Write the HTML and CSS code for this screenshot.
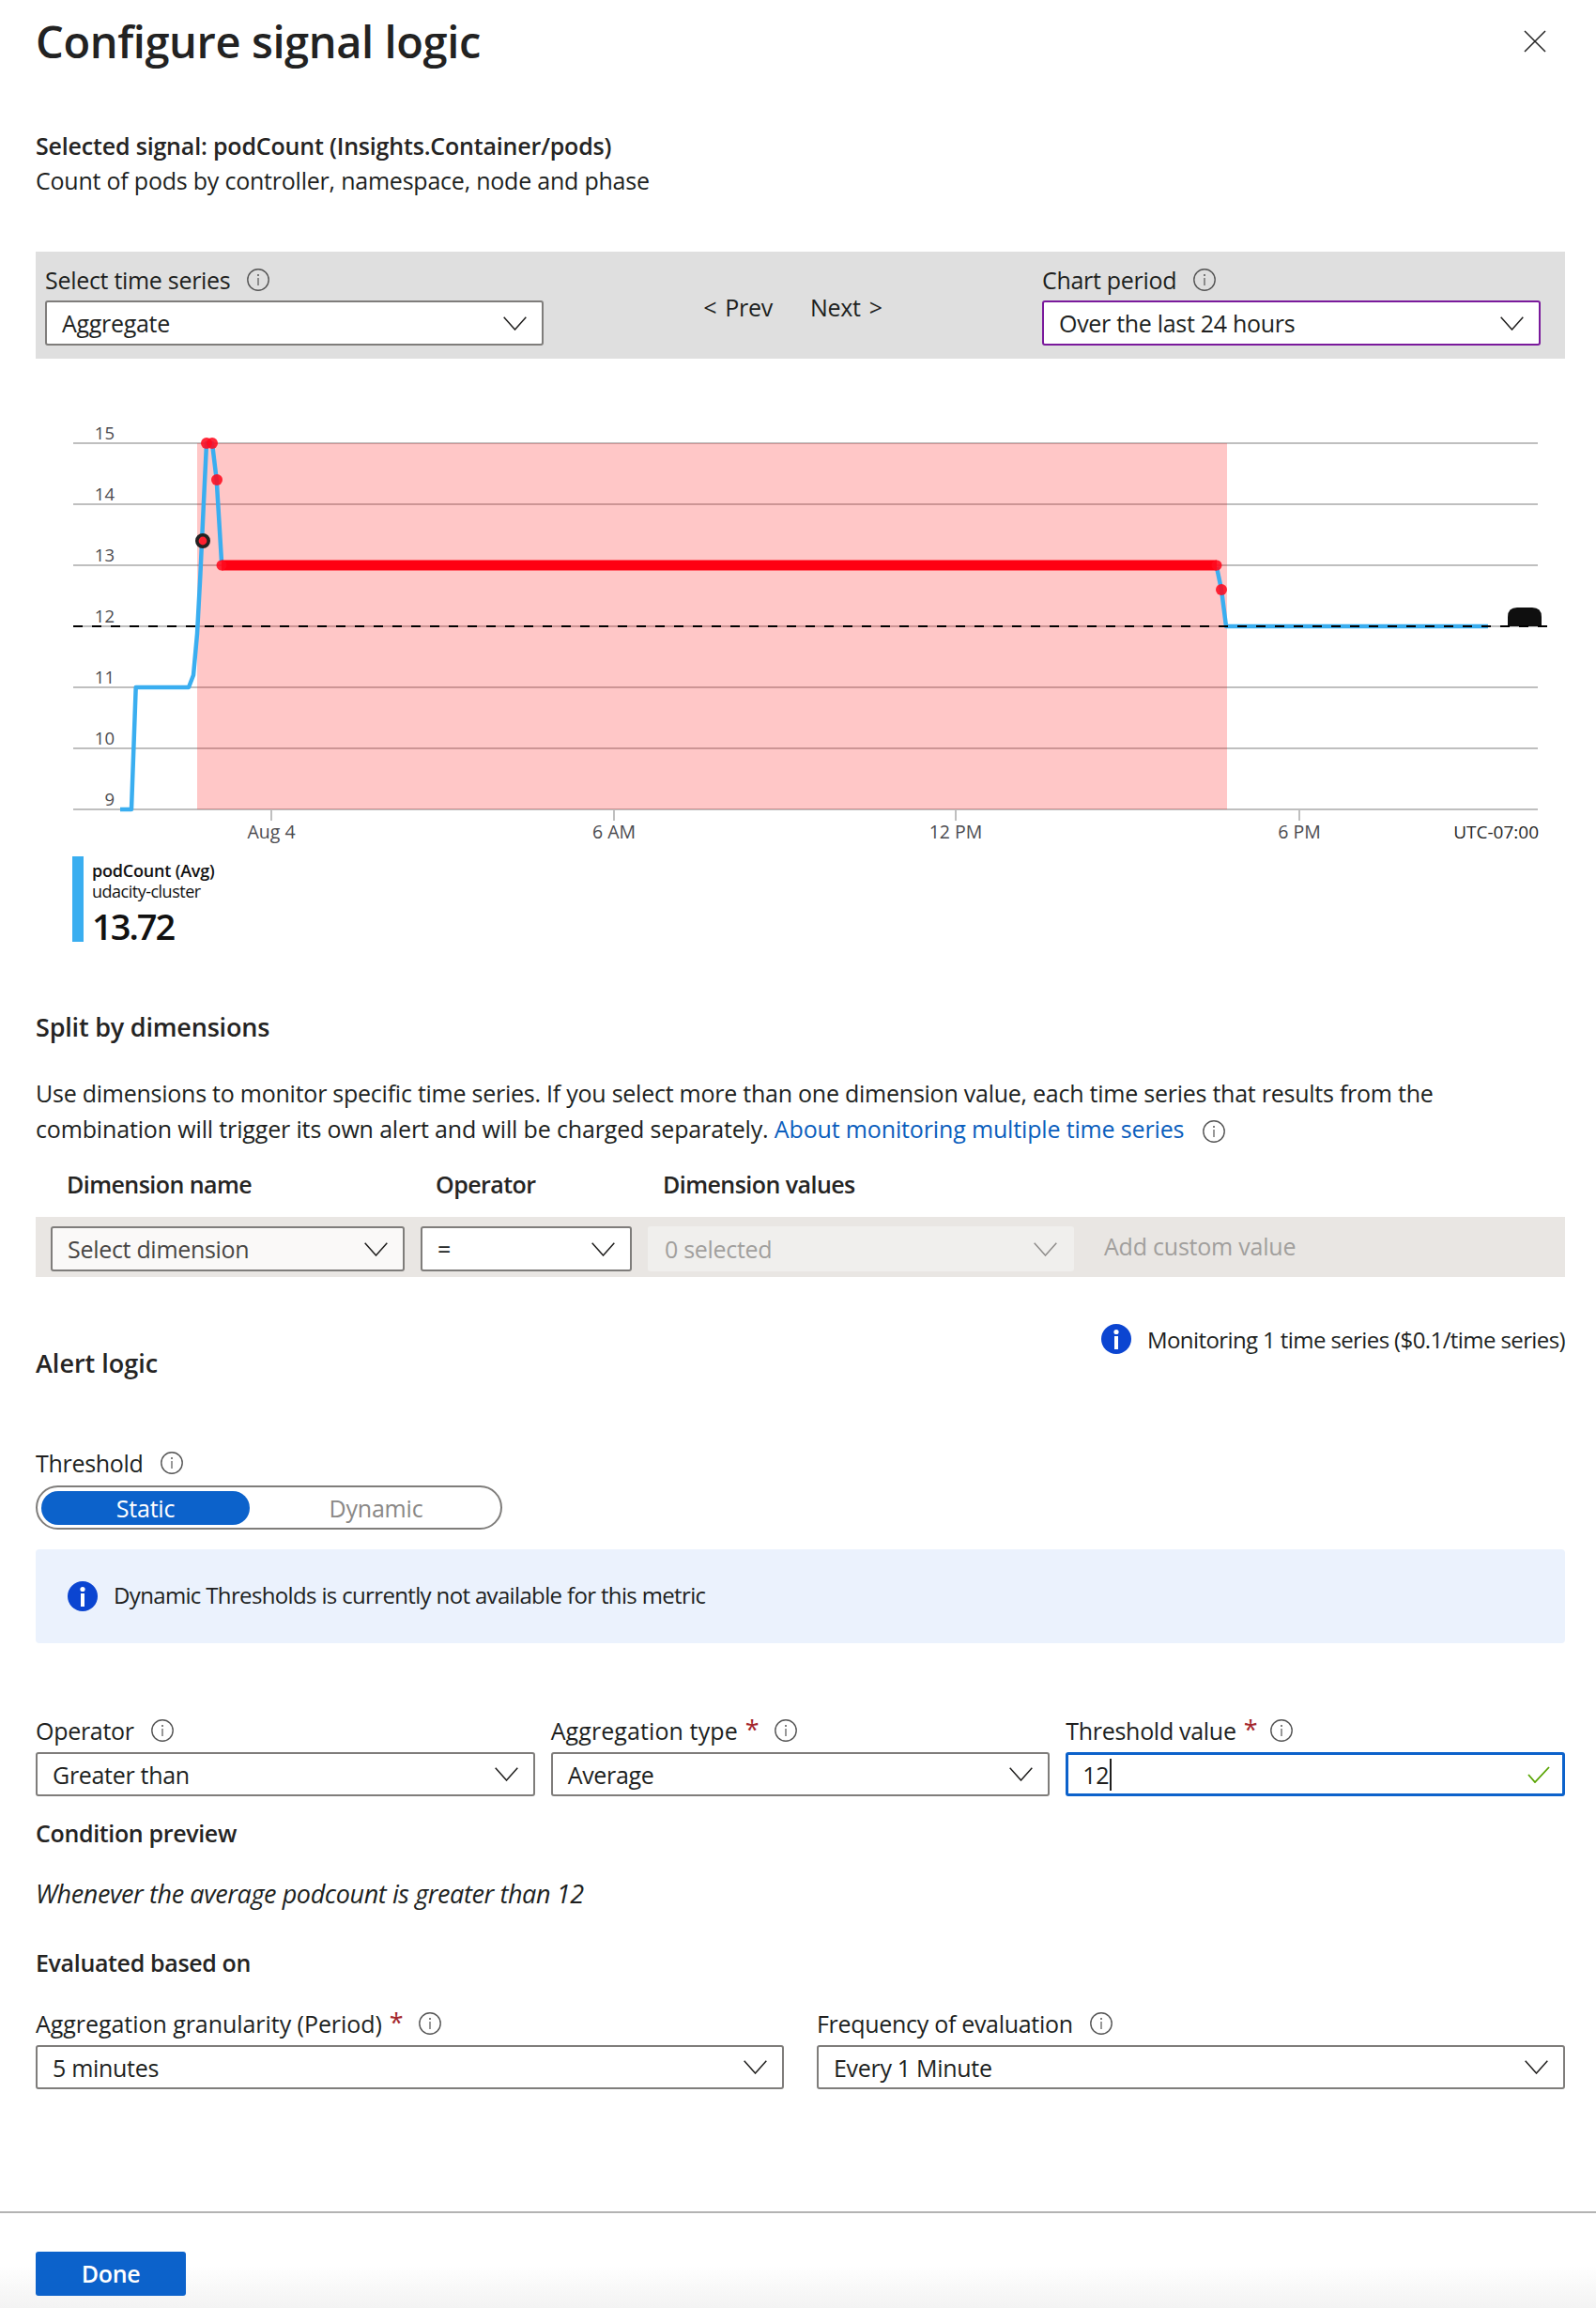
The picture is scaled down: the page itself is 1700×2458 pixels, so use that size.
FILE: index.html
```html
<!DOCTYPE html>
<html lang="en">
<head>
<meta charset="utf-8">
<title>Configure signal logic</title>
<link rel="stylesheet" href="styles.css">
</head>
<body>
<svg class="sprite" aria-hidden="true">
  <symbol id="chev" viewBox="0 0 25 15"><polyline points="0.7,0.7 12.5,14 24.3,0.7" fill="none" stroke="currentColor" stroke-width="1.5"/></symbol>
  <symbol id="info" viewBox="0 0 24 24"><circle cx="12" cy="12" r="11.2" fill="none" stroke="#555" stroke-width="1.4"/><circle cx="12" cy="7" r="1" fill="#555"/><rect x="11.4" y="10" width="1.2" height="8" fill="#555"/></symbol>
  <symbol id="binfo" viewBox="0 0 32 32"><circle cx="16" cy="16" r="16" fill="#0b45d1"/><circle cx="16" cy="8.5" r="2.6" fill="#fff"/><rect x="14" y="13" width="4" height="14" fill="#fff"/></symbol>
</svg>
<main class="panel">
  <header class="head">
    <h1 class="title">Configure signal logic</h1>
    <svg class="close" viewBox="0 0 24 24"><path d="M1 1 23 23M23 1 1 23" stroke="#222" stroke-width="1.5" fill="none"/></svg>
  </header>
  <p class="strong signal">Selected signal: podCount (Insights.Container/pods)</p>
  <p class="text desc">Count of pods by controller, namespace, node and phase</p>

  <section class="series">
    <div>
      <div class="label"><span>Select time series</span><svg class="ico"><use href="#info"/></svg></div>
      <div class="select"><span>Aggregate</span><svg class="chev"><use href="#chev"/></svg></div>
    </div>
    <div class="nav"><span>&lt; Prev</span><span>Next &gt;</span></div>
    <div>
      <div class="label"><span>Chart period</span><svg class="ico"><use href="#info"/></svg></div>
      <div class="select purple"><span>Over the last 24 hours</span><svg class="chev"><use href="#chev"/></svg></div>
    </div>
  </section>

  <svg class="chart" viewBox="38 382 1629 520">
    <g class="grid">
      <path d="M78 472H1638M78 537H1638M78 602H1638M78 667H1638M78 732H1638M78 797H1638M78 862H1638M289 862V874M654 862V874M1018 862V874M1384 862V874"/>
    </g>
    <rect class="alarm" x="210" y="472" width="1097" height="390"/>
    <g class="axis">
      <text x="122" y="468">15</text><text x="122" y="533">14</text><text x="122" y="598">13</text><text x="122" y="663">12</text><text x="122" y="728">11</text><text x="122" y="793">10</text><text x="122" y="858">9</text>
    </g>
    <g class="axis mid">
      <text x="289" y="893">Aug 4</text><text x="654" y="893">6 AM</text><text x="1018" y="893">12 PM</text><text x="1384" y="893">6 PM</text>
    </g>
    <text class="utc" x="1639" y="893">UTC-07:00</text>
    <polyline class="line" points="128,862 140,862 144.7,732 201,732 206,719 210,675 213.3,614 216.7,541 220,472 226,472 230.7,511 236,598"/>
    <polyline class="line" points="1296,604 1301,628 1306,667 1585,667"/>
    <line class="hot" x1="236" y1="602" x2="1296" y2="602"/>
    <path class="handle" d="M1606 667V657Q1606 647 1616 647H1632Q1642 647 1642 657V667Z"/>
    <line class="dash" x1="78" y1="667" x2="1648" y2="667"/>
    <g class="dots">
      <circle cx="220" cy="472" r="6"/><circle cx="226" cy="472" r="6"/><circle cx="231" cy="511" r="6"/><circle cx="236" cy="602" r="5.5"/><circle cx="1296" cy="602" r="5.5"/><circle cx="1301" cy="628" r="6"/>
    </g>
    <circle class="ring" cx="216" cy="576" r="6.2"/>
  </svg>

  <div class="legend">
    <div class="legend-bar"></div>
    <div>
      <div class="legend-name">podCount (Avg)</div>
      <div class="legend-sub">udacity-cluster</div>
      <div class="legend-val">13.72</div>
    </div>
  </div>

  <h2 class="strong section split">Split by dimensions</h2>
  <p class="text para">Use dimensions to monitor specific time series. If you select more than one dimension value, each time series that results from the<br><span class="para-2">combination will trigger its own alert and will be charged separately. <a class="link">About monitoring multiple time series</a></span><svg class="ico para-ico"><use href="#info"/></svg></p>

  <div class="dim-head strong"><span class="c1">Dimension name</span><span class="c2">Operator</span><span>Dimension values</span></div>
  <div class="dim-row">
    <div class="select soft w1"><span>Select dimension</span><svg class="chev"><use href="#chev"/></svg></div>
    <div class="select w2"><span>=</span><svg class="chev"><use href="#chev"/></svg></div>
    <div class="select off w3"><span>0 selected</span><svg class="chev"><use href="#chev"/></svg></div>
    <span class="custom">Add custom value</span>
  </div>

  <div class="alert-head">
    <h2 class="strong section alert">Alert logic</h2>
    <div class="monitor"><svg class="bico"><use href="#binfo"/></svg><span>Monitoring 1 time series ($0.1/time series)</span></div>
  </div>

  <div class="label thresh"><span>Threshold</span><svg class="ico"><use href="#info"/></svg></div>
  <div class="toggle"><span class="on">Static</span><span class="offt">Dynamic</span></div>

  <div class="banner"><svg class="bico"><use href="#binfo"/></svg><span>Dynamic Thresholds is currently not available for this metric</span></div>

  <div class="row3">
    <div>
      <div class="label"><span>Operator</span><svg class="ico"><use href="#info"/></svg></div>
      <div class="select"><span>Greater than</span><svg class="chev"><use href="#chev"/></svg></div>
    </div>
    <div>
      <div class="label wide"><span>Aggregation type</span><b class="req">*</b><svg class="ico"><use href="#info"/></svg></div>
      <div class="select"><span>Average</span><svg class="chev"><use href="#chev"/></svg></div>
    </div>
    <div>
      <div class="label"><span>Threshold value</span><b class="req">*</b><svg class="ico"><use href="#info"/></svg></div>
      <div class="select focus"><span>12</span><i class="caret"></i><svg class="check" viewBox="0 0 24 18"><polyline points="1,9 8,17 23,1" fill="none" stroke="#57a300" stroke-width="1.8"/></svg></div>
    </div>
  </div>

  <h2 class="strong sub cond">Condition preview</h2>
  <p class="text preview">Whenever the average podcount is greater than 12</p>
  <h2 class="strong sub eval">Evaluated based on</h2>

  <div class="row2">
    <div>
      <div class="label wide gran"><span>Aggregation granularity (Period)</span><b class="req">*</b><svg class="ico"><use href="#info"/></svg></div>
      <div class="select"><span>5 minutes</span><svg class="chev"><use href="#chev"/></svg></div>
    </div>
    <div>
      <div class="label"><span>Frequency of evaluation</span><svg class="ico"><use href="#info"/></svg></div>
      <div class="select"><span>Every 1 Minute</span><svg class="chev"><use href="#chev"/></svg></div>
    </div>
  </div>
</main>
<footer class="foot"><button class="done">Done</button></footer>
</body>
</html>
```

FILE: styles.css
```css
* { box-sizing: border-box; }
html, body { margin: 0; padding: 0; }
body {
  width: 1700px;
  height: 2458px;
  background: #fff;
  color: #201f1e;
  font-family: "Open Sans", "Noto Sans", sans-serif;
  font-size: 25px;
  letter-spacing: -0.22px;
  line-height: 38px;
  overflow: hidden;
}
.sprite { display: none; }
.panel { padding: 0 33px 0 38px; }
h1, h2, p { margin: 0; font-size: inherit; font-weight: inherit; }
.strong { font-weight: 600; color: #252423; }
.head { display: flex; justify-content: space-between; align-items: center; padding-top: 12px; height: 76px; }
.title { font-size: 47px; line-height: 64px; font-weight: 600; letter-spacing: -0.4px; color: #222; }
.close { width: 24px; height: 24px; margin-right: 20px; }
.signal { margin-top: 60px; letter-spacing: -0.18px; }
.desc { margin-top: -1px; }

.series {
  display: grid;
  grid-template-columns: 531px 1fr 531px;
  margin-top: 57px;
  height: 114px;
  padding: 10px 26px 14px 10px;
  background: #dfdfdf;
}
.label { display: flex; align-items: center; height: 40px; letter-spacing: -0.3px; }
.label.wide { letter-spacing: 0.1px; }
.label.wide .ico { margin-left: 16px; }
.label.gran { letter-spacing: -0.05px; }
.ico { width: 24px; height: 24px; margin-left: 18px; margin-top: -1px; flex: none; }
.nav { display: flex; justify-content: center; gap: 40px; align-self: center; margin-top: 8px; word-spacing: 3px; letter-spacing: -0.3px; }
.select {
  display: flex;
  align-items: center;
  justify-content: space-between;
  height: 48px;
  margin-top: 2px;
  padding: 0 16px;
  background: #fff;
  border: 2px solid #7f7d7b;
  border-radius: 3px;
  color: #201f1e;
  letter-spacing: -0.3px;
}
.chev { width: 25px; height: 15px; color: #201f1e; flex: none; }
.purple { border-color: #7a1a9c; }

.chart { display: block; width: 1629px; height: 520px; }
.grid path { stroke: #bfbfbf; stroke-width: 2; fill: none; }
.alarm { fill: #ff0000; opacity: 0.22; }
.axis text { font-size: 18.5px; letter-spacing: 0; fill: #4b4b50; text-anchor: end; }
.axis.mid text { font-size: 19.5px; text-anchor: middle; }
.utc { font-size: 19px; letter-spacing: 0; fill: #1f1f1f; text-anchor: end; }
.line { fill: none; stroke: #3aaef0; stroke-width: 4.5; stroke-linejoin: round; }
.hot { stroke: #ff0012; stroke-width: 11; }
.handle { fill: #0f0f0f; }
.dash { stroke: #000; stroke-width: 2; stroke-dasharray: 10 10; }
.dots circle { fill: #ff0a1e; opacity: 0.88; }
.ring { fill: #ff2030; stroke: #222; stroke-width: 3.6; }

.legend { display: flex; gap: 9px; height: 91px; margin-top: 10px; padding-left: 39px; color: #111; }
.legend-bar { width: 12px; background: #3aaef0; }
.legend-name { margin-top: 4px; font-size: 18px; line-height: 22px; font-weight: 600; letter-spacing: -0.2px; }
.legend-sub { font-size: 18px; line-height: 22px; letter-spacing: -0.5px; }
.legend-val { margin-top: 4px; font-size: 38px; line-height: 44px; font-weight: 600; letter-spacing: -2px; }

.section { font-size: 27px; letter-spacing: -0.2px; }
.split { margin-top: 72px; }
.para { margin-top: 32px; letter-spacing: -0.245px; }
.para-2 { letter-spacing: -0.15px; }
.link { color: #0a5ebd; }
.para-ico { margin-left: 20px; vertical-align: -5px; margin-top: 0; }

.dim-head { display: flex; margin-top: 21px; padding-left: 33px; letter-spacing: -0.55px; }
.c1 { width: 393px; }
.c2 { width: 242px; }
.dim-row {
  display: flex;
  align-items: flex-start;
  gap: 17px;
  height: 64px;
  margin-top: 16px;
  padding: 8px 16px 0;
  background: #e9e6e3;
}
.w1 { width: 377px; }
.w2 { width: 225px; }
.w3 { width: 454px; }
.soft { background: #faf9f8; color: #484644; }
.off { background: #f0efed; border-color: #f0efed; color: #a19f9d; }
.off .chev { color: #8f8d8b; }
.custom { margin: 4px 0 0 15px; color: #a19f9d; }

.alert-head { display: flex; justify-content: space-between; align-items: flex-start; height: 64px; margin-top: 47px; }
.alert { margin-top: 26px; letter-spacing: 0; }
.monitor { display: flex; align-items: center; gap: 17px; padding-top: 1px; font-size: 24px; letter-spacing: -0.6px; }
.bico { width: 32px; height: 32px; flex: none; margin-top: -3px; }
.thresh { height: 38px; margin-top: 68px; }
.toggle {
  display: flex;
  align-items: center;
  width: 497px;
  height: 47px;
  margin-top: 5px;
  padding: 0 4px;
  border: 2px solid #7f7d7b;
  border-radius: 24px;
}
.on {
  width: 222px;
  height: 36px;
  line-height: 36px;
  text-align: center;
  color: #fff;
  background: #0c62cb;
  border-radius: 18px;
}
.offt { flex: 1; text-align: center; color: #8a8886; padding-left: 6px; }
.banner {
  display: flex;
  align-items: center;
  gap: 17px;
  height: 100px;
  margin-top: 21px;
  padding-left: 34px;
  background: #ebf2fd;
  border-radius: 4px;
  font-size: 24px;
  letter-spacing: -0.65px;
}
.banner span { margin-bottom: 2px; }
.banner .bico { margin-top: 0; }

.row3 { display: grid; grid-template-columns: repeat(3, 1fr); gap: 17px; margin-top: 74px; }
.row3 .label { height: 38px; }
.row3 .select { height: 47px; margin-top: 4px; }
.row2 { display: grid; grid-template-columns: 1fr 1fr; gap: 35px; margin-top: 27px; }
.row2 .label { height: 38px; }
.row2 .select { height: 47px; margin-top: 4px; }
.req { margin-left: 8px; color: #a4262c; font-weight: 400; font-size: 27px; line-height: 30px; margin-top: -3px; }
.req + .ico { margin-left: 14px; }
.focus { border: 3px solid #0c62cb; justify-content: flex-start; padding: 0 13px 0 15px; }
.caret { width: 2px; height: 34px; margin-left: 1px; background: #201f1e; }
.check { width: 24px; height: 18px; margin-left: auto; }
.sub { letter-spacing: -0.35px; }
.cond { margin-top: 20px; }
.preview { margin-top: 27px; font-size: 27px; font-style: italic; letter-spacing: -0.4px; }
.eval { margin-top: 35px; }

.foot {
  height: 103px;
  margin-top: 130px;
  padding: 41px 0 0 38px;
  border-top: 2px solid #b3b3b3;
  background: linear-gradient(#fff 55%, #f3f3f3);
}
.done {
  display: block;
  width: 160px;
  height: 47px;
  padding: 0;
  border: 0;
  border-radius: 3px;
  background: #0c62cb;
  color: #fff;
  font: 600 25px/47px "Open Sans", sans-serif;
  letter-spacing: -0.3px;
}
```
